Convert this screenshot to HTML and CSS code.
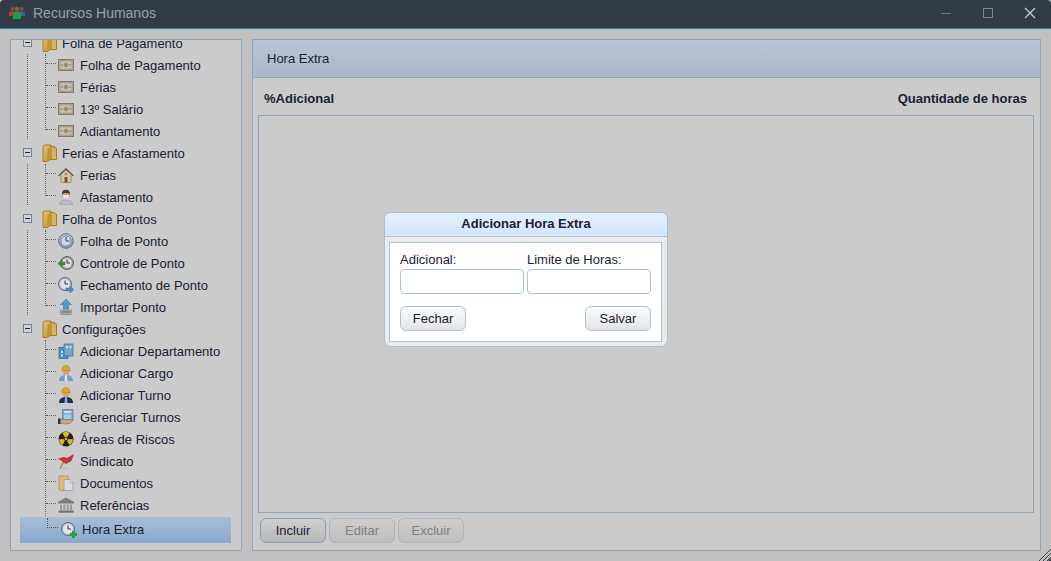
FILE: index.html
```html
<!DOCTYPE html>
<html lang="pt-BR">
<head>
    <meta charset="UTF-8">
    <title>Recursos Humanos</title>
    <link rel="stylesheet" href="styles.css">
</head>
<body>
    <!-- Icon sprites -->
    <svg class="sprites" width="0" height="0">
        <defs>
            <linearGradient id="gold" x1="0" y1="0" x2="1" y2="1"><stop offset="0" stop-color="#e6c677"/><stop offset="1" stop-color="#bd9030"/></linearGradient>
            <linearGradient id="clockface" x1="0" y1="0" x2="0" y2="1"><stop offset="0" stop-color="#d4dae6"/><stop offset="1" stop-color="#8f9ab2"/></linearGradient>
            <symbol id="i-folder" viewBox="0 0 16 18">
                <path d="M8 2.500h4.500l1 1.500h1v11.500H8z" fill="#d6b262" stroke="#a67c1c"/>
                <path d="M1 3c0-1 .8-2 2-2h6v14l-4 2.500H1z" fill="url(#gold)" stroke="#a67c1c"/>
                <path d="M9 3 5.500 5v12L9 15z" fill="#c2952f"/>
            </symbol>
            <symbol id="i-money" viewBox="0 0 16 16">
                <rect x="0.500" y="2.500" width="15" height="11" fill="#b3a998" stroke="#83786a"/>
                <rect x="2" y="4" width="12" height="8" fill="#c9c2b4" stroke="#978d7b" stroke-width=".6"/>
                <circle cx="8" cy="8" r="2.300" fill="#958c7b"/>
                <rect x="3" y="7" width="2" height="2" fill="#a59c8b"/>
                <rect x="11" y="7" width="2" height="2" fill="#a59c8b"/>
            </symbol>
            <symbol id="i-house" viewBox="0 0 16 16">
                <path d="M3 7v8.500h10V7L8 2.500z" fill="#d6c4ab" stroke="#8d7a62" stroke-width=".7"/>
                <path d="M0 8.500 8 1l8 7.500-1 .8L8 3 1 9.300z" fill="#5f5852"/>
                <rect x="6.500" y="10" width="3" height="5.500" fill="#84482b"/>
                <rect x="6.800" y="6" width="2.400" height="2.200" fill="#a98e70"/>
            </symbol>
            <symbol id="i-nurse" viewBox="0 0 16 16">
                <path d="M1.500 16c0-4 3-5 6.500-5s6.500 1 6.500 5z" fill="#b8bbc6" stroke="#8b8e9c" stroke-width=".5"/>
                <circle cx="8" cy="5.500" r="4" fill="#c99c80"/>
                <path d="M4 5.500C3.800 2 6 .8 8 .8s4.200 1.200 4 4.700c-1.500-2-6.500-2-8 0z" fill="#4a3a32"/>
                <path d="M5 6h6l-.5 3.500H5.500z" fill="#e6e8ee"/>
            </symbol>
            <symbol id="i-clock" viewBox="0 0 16 16">
                <circle cx="8" cy="8" r="7.300" fill="url(#clockface)" stroke="#5f6878"/>
                <circle cx="8" cy="8" r="5.200" fill="#cdd4e2" stroke="#6f80ac"/>
                <path d="M8 4v4h3.500" fill="none" stroke="#3a4460"/>
            </symbol>
            <symbol id="i-clock-back" viewBox="0 0 16 16">
                <circle cx="9" cy="8" r="6.500" fill="#9e9e9e" stroke="#626262"/>
                <circle cx="9" cy="8" r="4.800" fill="#dcdcdc"/>
                <path d="M9 4.500V8h3" fill="none" stroke="#333"/>
                <path d="M0 8.500 4 4.500v2.500h3v3H4v2.500z" fill="#2f9a2c" stroke="#1d6d1b" stroke-width=".4"/>
            </symbol>
            <symbol id="i-clock-go" viewBox="0 0 16 16">
                <circle cx="7" cy="7" r="6.500" fill="#b6bcc7" stroke="#69707c"/>
                <circle cx="7" cy="7" r="4.800" fill="#dfe2e7"/>
                <path d="M7 3.500V7h3" fill="none" stroke="#333"/>
                <path d="M8 11h4V9l4 3.500-4 3.500v-2H8z" fill="#4c8fd0" stroke="#2c659e" stroke-width=".4"/>
            </symbol>
            <symbol id="i-clock-add" viewBox="0 0 16 16">
                <circle cx="7" cy="7" r="6.500" fill="#bcc2cc" stroke="#5f6672"/>
                <circle cx="7" cy="7" r="4.800" fill="#e2e5ea"/>
                <path d="M7 3.500V7h3" fill="none" stroke="#333"/>
                <rect x="9" y="11" width="7" height="3" fill="#2f9c38"/>
                <rect x="11" y="9" width="3" height="7" fill="#2f9c38"/>
            </symbol>
            <symbol id="i-import" viewBox="0 0 16 16">
                <path d="M8 0l5.500 5.500H10.500V10h-5V5.500H2.500z" fill="#4f9ad8" stroke="#2d6ca6" stroke-width=".5"/>
                <rect x="2.500" y="11" width="11" height="4.500" rx="1" fill="#aeb0b2" stroke="#727476" stroke-width=".6"/>
                <rect x="4" y="12.500" width="8" height="1" fill="#5c5c5c"/>
            </symbol>
            <symbol id="i-dept" viewBox="0 0 16 16">
                <rect x="1" y="4.500" width="9" height="11" fill="#4f93c6" stroke="#2d6a9c" stroke-width=".7"/>
                <rect x="6" y="1" width="9" height="12" fill="#74aad2" stroke="#2d6a9c" stroke-width=".7"/>
                <rect x="8" y="3" width="2" height="2" fill="#cfe2f0"/>
                <rect x="11.500" y="3" width="2" height="2" fill="#cfe2f0"/>
                <rect x="3" y="8" width="2" height="2" fill="#cfe2f0"/>
                <rect x="3" y="11.500" width="2" height="2" fill="#cfe2f0"/>
            </symbol>
            <symbol id="i-worker" viewBox="0 0 16 16">
                <path d="M1 16c0-4 2.500-6 7-6s7 2 7 6z" fill="#6f9ccb"/>
                <path d="M7 10h2l.5 6h-3z" fill="#dfe5ec"/>
                <circle cx="8" cy="6.500" r="3.500" fill="#d2a07a"/>
                <path d="M3.800 5.500C3.800 2 6 .6 8 .6s4.200 1.400 4.200 4.900z" fill="#dba825" stroke="#a67b12" stroke-width=".5"/>
            </symbol>
            <symbol id="i-worker-dark" viewBox="0 0 16 16">
                <path d="M1 16c0-4 2.500-6 7-6s7 2 7 6z" fill="#252c48"/>
                <path d="M7 10h2l.5 6h-3z" fill="#8fa9cc"/>
                <circle cx="8" cy="6.500" r="3.500" fill="#d2a07a"/>
                <path d="M3.800 5.500C3.800 2 6 .6 8 .6s4.200 1.400 4.200 4.900z" fill="#dba825" stroke="#a67b12" stroke-width=".5"/>
            </symbol>
            <symbol id="i-shifts" viewBox="0 0 16 16">
                <rect x="4.500" y="0.500" width="10.500" height="11" fill="#74a6cf" stroke="#4d6f90" stroke-width=".6"/>
                <rect x="6" y="2" width="7.500" height="2" fill="#cfe2f0"/>
                <path d="M6 5.500h7.500V10H6z" fill="#a9cbe4"/>
                <path d="M0 10h3.500c2 0 3 1 5 1l3-.5 3 .5c.6 1-1 2.500-3 3.500-2 .8-5 .5-8 0H0z" fill="#cfa484" stroke="#7b5f4a" stroke-width=".5"/>
                <rect x="0" y="9.500" width="2.500" height="5.500" fill="#2b3350"/>
            </symbol>
            <symbol id="i-radiation" viewBox="0 0 16 16">
                <circle cx="8" cy="8" r="7.500" fill="#1e1e1c"/>
                <path d="M8 8 4.300 1.900A7 7 0 0 1 11.700 1.900zM8 8l7 .2A7 7 0 0 1 11.500 14zM8 8 4.500 14A7 7 0 0 1 1 8.200z" fill="#d9ba1c"/>
                <circle cx="8" cy="8" r="1.800" fill="#d9ba1c" stroke="#1e1e1c" stroke-width=".8"/>
            </symbol>
            <symbol id="i-flag" viewBox="0 0 16 16">
                <path d="M2 15.500 6 8" stroke="#b7835a" stroke-width="1.500" fill="none"/>
                <path d="M0 5.500 6 4l3 1 7-4-2.500 7L8 11 5 9z" fill="#c0353a"/>
                <path d="M3 16h7" stroke="#a9a9a9"/>
            </symbol>
            <symbol id="i-docs" viewBox="0 0 16 16">
                <path d="M1 1h9v14.500H3l-2-1z" fill="#dcbb72" stroke="#a78a45" stroke-width=".7"/>
                <path d="M6 4.500h6l3 3v8H6z" fill="#d9dee4" stroke="#8d959e" stroke-width=".7"/>
                <path d="M12 4.500v3h3" fill="#f2f2f2" stroke="#8d959e" stroke-width=".6"/>
            </symbol>
            <symbol id="i-bank" viewBox="0 0 16 16">
                <path d="M8 .5 16 5v1.500H0V5z" fill="#7f7d79"/>
                <path d="M2 7.500h2v5.500H2zM5.300 7.500h2v5.500h-2zM8.700 7.500h2v5.500h-2zM12 7.500h2v5.500h-2z" fill="#9b9994"/>
                <rect x="0.500" y="13.500" width="15" height="2.200" fill="#72706b"/>
            </symbol>
        </defs>
    </svg>

    <div class="app">
        <header class="titlebar">
            <svg class="app-icon" viewBox="0 0 16 14" width="16" height="14">
                <circle cx="3.500" cy="3" r="2" fill="#8f4a3a"/>
                <circle cx="8" cy="3" r="2.200" fill="#a5553f"/>
                <circle cx="12.500" cy="3" r="2" fill="#8f4a3a"/>
                <path d="M0 10V7c0-1 1.500-1.500 3.500-1.500S7 6 7 7v3z" fill="#c9302c"/>
                <path d="M9 10V7c0-1 1.500-1.500 3.500-1.500S16 6 16 7v3z" fill="#23689c"/>
                <path d="M4 13V7c0-1 2-1.800 4-1.800s4 .8 4 1.800v6z" fill="#1f9a46"/>
            </svg>
            <span class="app-title">Recursos Humanos</span>
            <div class="window-controls">
                <svg viewBox="0 0 12 12" width="12" height="12"><path d="M1 6.500h10" stroke="#6e7780" fill="none"/></svg>
                <svg viewBox="0 0 12 12" width="12" height="12"><rect x="1.500" y="1.500" width="9" height="9" stroke="#7d858d" fill="none"/></svg>
                <svg viewBox="0 0 12 12" width="12" height="12"><path d="M1 1l10 10M11 1 1 11" stroke="#c9ccd0" stroke-width="1.300" fill="none"/></svg>
            </div>
        </header>

        <div class="workspace">
            <nav class="tree-panel">
                <div class="tree">
                    <div class="group">
                        <div class="group-row"><span class="toggle"></span><svg class="folder"><use href="#i-folder"/></svg>Folha de Pagamento</div>
                        <ul class="leaves">
                            <li><svg class="icon"><use href="#i-money"/></svg>Folha de Pagamento</li>
                            <li><svg class="icon"><use href="#i-money"/></svg>Férias</li>
                            <li><svg class="icon"><use href="#i-money"/></svg>13º Salário</li>
                            <li><svg class="icon"><use href="#i-money"/></svg>Adiantamento</li>
                        </ul>
                    </div>
                    <div class="group">
                        <div class="group-row"><span class="toggle"></span><svg class="folder"><use href="#i-folder"/></svg>Ferias e Afastamento</div>
                        <ul class="leaves">
                            <li><svg class="icon"><use href="#i-house"/></svg>Ferias</li>
                            <li><svg class="icon"><use href="#i-nurse"/></svg>Afastamento</li>
                        </ul>
                    </div>
                    <div class="group">
                        <div class="group-row"><span class="toggle"></span><svg class="folder"><use href="#i-folder"/></svg>Folha de Pontos</div>
                        <ul class="leaves">
                            <li><svg class="icon"><use href="#i-clock"/></svg>Folha de Ponto</li>
                            <li><svg class="icon"><use href="#i-clock-back"/></svg>Controle de Ponto</li>
                            <li><svg class="icon"><use href="#i-clock-go"/></svg>Fechamento de Ponto</li>
                            <li><svg class="icon"><use href="#i-import"/></svg>Importar Ponto</li>
                        </ul>
                    </div>
                    <div class="group last">
                        <div class="group-row"><span class="toggle"></span><svg class="folder"><use href="#i-folder"/></svg>Configurações</div>
                        <ul class="leaves">
                            <li><svg class="icon"><use href="#i-dept"/></svg>Adicionar Departamento</li>
                            <li><svg class="icon"><use href="#i-worker"/></svg>Adicionar Cargo</li>
                            <li><svg class="icon"><use href="#i-worker-dark"/></svg>Adicionar Turno</li>
                            <li><svg class="icon"><use href="#i-shifts"/></svg>Gerenciar Turnos</li>
                            <li><svg class="icon"><use href="#i-radiation"/></svg>Áreas de Riscos</li>
                            <li><svg class="icon"><use href="#i-flag"/></svg>Sindicato</li>
                            <li><svg class="icon"><use href="#i-docs"/></svg>Documentos</li>
                            <li><svg class="icon"><use href="#i-bank"/></svg>Referências</li>
                            <li class="selected"><svg class="icon"><use href="#i-clock-add"/></svg>Hora Extra</li>
                        </ul>
                    </div>
                </div>
            </nav>

            <main class="main-panel">
                <div class="panel-header">Hora Extra</div>
                <div class="columns">
                    <span>%Adicional</span>
                    <span>Quantidade de horas</span>
                </div>
                <div class="grid-box"></div>
                <div class="actions">
                    <button class="btn btn-dim" type="button">Incluir</button>
                    <button class="btn btn-dim" type="button" disabled>Editar</button>
                    <button class="btn btn-dim" type="button" disabled>Excluir</button>
                </div>
            </main>
        </div>

        <svg class="grip" viewBox="0 0 12 12" width="12" height="12">
            <path d="M0 12 12 0M4 12l8-8M8 12l4-4" stroke="#3c3c3c" fill="none"/>
            <path d="M9 12l3-3v3z" fill="#2a3a4a"/>
        </svg>

        <!-- Modal -->
        <div class="dialog">
            <div class="dialog-title">Adicionar Hora Extra</div>
            <div class="dialog-body">
                <div class="fields">
                    <label>Adicional:<input type="text"></label>
                    <label>Limite de Horas:<input type="text"></label>
                </div>
                <div class="dialog-actions">
                    <button class="btn" type="button">Fechar</button>
                    <button class="btn" type="button">Salvar</button>
                </div>
            </div>
        </div>
    </div>
</body>
</html>
```

FILE: styles.css
```css
/* General Page Styling */
html, body {
    margin: 0;
    padding: 0;
    height: 100%;
    overflow: hidden;
}

body {
    font-family: 'Liberation Sans', Arial, sans-serif;
    font-size: 13px;
    color: #1a2233;
    background-color: #c0c0c0;
}

.sprites {
    position: absolute;
}

.app {
    position: relative;
    display: flex;
    flex-direction: column;
    height: 561px;
    background-color: #c0c0c0;
}

/* Title bar */
.titlebar {
    display: flex;
    align-items: center;
    flex: none;
    height: 29px;
    padding: 0 10px 2px 9px;
    box-sizing: border-box;
    background-color: #323c47;
    border-bottom: 1px solid #1b8ba3;
    border-radius: 4px 4px 0 0;
}

.app-icon {
    margin-right: 8px;
}

.app-title {
    font-size: 14px;
    color: #97a0a8;
}

.window-controls {
    display: flex;
    gap: 30px;
    margin-left: auto;
    margin-right: 5px;
}

/* Workspace */
.workspace {
    display: flex;
    gap: 10px;
    height: 512px;
    margin: 10px 10px 0;
}

.tree-panel {
    flex: none;
    width: 230px;
    border: 1px solid #8fa5bb;
    background-color: #cbcbcb;
    overflow: hidden;
}

/* Tree */
.tree {
    margin-top: -8px;
}

.group {
    position: relative;
}

.group::before {
    content: "";
    position: absolute;
    left: 16px;
    top: 22px;
    bottom: 3px;
    border-left: 1px dotted #666;
}

.group.last::before {
    display: none;
}

.group-row {
    display: flex;
    align-items: center;
    height: 22px;
}

.toggle {
    position: relative;
    flex: none;
    width: 7px;
    height: 7px;
    margin: -2px 0 0 12px;
    border: 1px solid #6f8299;
    background-color: #d2d2d2;
}

.toggle::after {
    content: "";
    position: absolute;
    left: 1px;
    top: 3px;
    width: 5px;
    height: 1px;
    background-color: #222;
}

.folder {
    flex: none;
    width: 16px;
    height: 18px;
    margin: 0 4px 0 10px;
}

.leaves {
    position: relative;
    list-style: none;
    margin: 0;
    padding: 0;
}

.leaves::before {
    content: "";
    position: absolute;
    left: 34px;
    top: 0;
    bottom: 12px;
    border-left: 1px dotted #666;
}

.group.last .leaves::before {
    bottom: 27px;
}

.leaves li {
    position: relative;
    display: flex;
    align-items: center;
    height: 22px;
    padding-left: 47px;
}

.leaves li::before {
    content: "";
    position: absolute;
    left: 35px;
    top: 9px;
    width: 10px;
    border-top: 1px dotted #666;
}

.icon {
    flex: none;
    width: 16px;
    height: 16px;
    margin-right: 6px;
}

.leaves li.selected {
    box-sizing: border-box;
    height: 26px;
    margin: 1px 10px 0 9px;
    padding-left: 41px;
    padding-bottom: 2px;
    background: linear-gradient(#a9bed5, #88a8cd);
}

.leaves li.selected .icon {
    margin: 2px 5px 0 0;
}

.leaves li.selected::before {
    left: 27px;
    top: 1px;
    width: 10px;
    height: 9px;
    border-left: 1px dotted #555;
    border-bottom: 1px dotted #555;
    border-top: none;
}

/* Main panel */
.main-panel {
    display: flex;
    flex-direction: column;
    flex: 1;
    min-width: 0;
    border: 1px solid #8fa5bb;
    background-color: #cbcbcb;
}

.panel-header {
    flex: none;
    height: 37px;
    line-height: 37px;
    padding-left: 14px;
    background: linear-gradient(#b9c4d0, #a9b8ca);
    border-bottom: 1px solid #8fa5bb;
}

.columns {
    display: flex;
    justify-content: space-between;
    flex: none;
    height: 37px;
    line-height: 42px;
    padding: 0 13px 0 11px;
    font-weight: bold;
}

.grid-box {
    flex: 1;
    margin: 0 6px 0 5px;
    border: 1px solid #8fa5bb;
}

.actions {
    display: flex;
    flex: none;
    gap: 3px;
    padding: 5px 7px 7px;
}

/* Buttons */
.btn {
    width: 66px;
    height: 25px;
    padding: 0;
    font-family: inherit;
    font-size: 13px;
    color: #1a2233;
    background: linear-gradient(#fbfbfb, #e4e4e4);
    border: 1px solid #a9c4da;
    border-radius: 6px;
}

.btn-dim {
    background: linear-gradient(#cfcfcf, #b7b7b7);
    border-color: #86a0b8;
}

.btn-dim:disabled {
    color: #828282;
    background: linear-gradient(#cdcdcd, #bfbfbf);
    border-color: #b3b3b3;
}

/* Dialog */
.dialog {
    position: absolute;
    left: 384px;
    top: 212px;
    width: 282px;
    height: 133px;
    background-color: #ebebeb;
    border: 1px solid #a9c0d4;
    border-radius: 7px;
}

.dialog-title {
    height: 23px;
    line-height: 22px;
    text-align: center;
    font-weight: bold;
    background: linear-gradient(#e6f0fd, #d2e4fb);
    border-bottom: 1px solid #afc6da;
    border-radius: 6px 6px 0 0;
}

.dialog-body {
    height: 98px;
    margin: 5px 5px 0 4px;
    padding: 0 10px;
    background-color: #fff;
    border: 1px solid #a9c4da;
}

.fields {
    display: flex;
    gap: 3px;
    padding-top: 9px;
}

.fields label {
    display: flex;
    flex-direction: column;
    width: 124px;
    line-height: 15px;
}

.fields input {
    box-sizing: border-box;
    width: 124px;
    height: 25px;
    margin-top: 2px;
    border: 1px solid #a9c4da;
    border-radius: 4px;
    background-color: #fff;
}

.dialog-actions {
    display: flex;
    justify-content: space-between;
    margin-top: 12px;
}

/* Resize handle */
.grip {
    position: absolute;
    right: 0;
    bottom: 0;
}
```
